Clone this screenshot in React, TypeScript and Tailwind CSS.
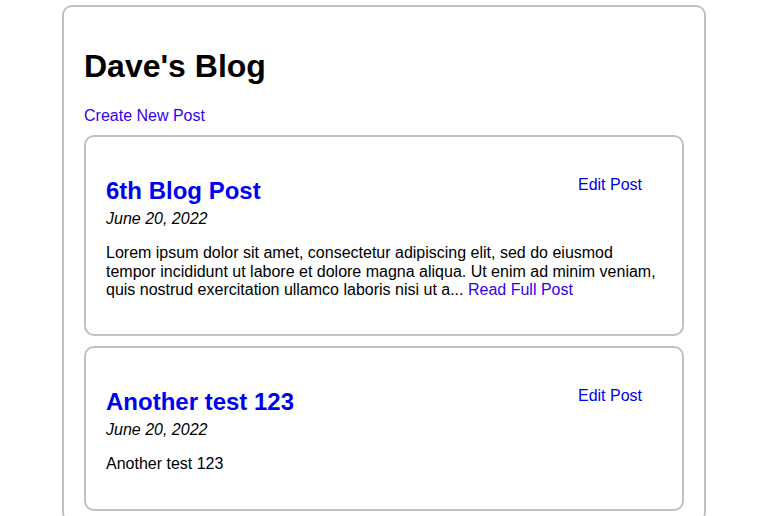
import React from 'react';

interface Post {
  id: number;
  title: string;
  date: string;
  body: string;
  truncated?: boolean;
}

const posts: Post[] = [
  {
    id: 6,
    title: '6th Blog Post',
    date: 'June 20, 2022',
    body: 'Lorem ipsum dolor sit amet, consectetur adipiscing elit, sed do eiusmod tempor incididunt ut labore et dolore magna aliqua. Ut enim ad minim veniam, quis nostrud exercitation ullamco laboris nisi ut a...',
    truncated: true,
  },
  {
    id: 5,
    title: 'Another test 123',
    date: 'June 20, 2022',
    body: 'Another test 123',
  },
];

const PostCard: React.FC<{ post: Post }> = ({ post }) => (
  <article className="mb-[10px] rounded-[10px] border-2 border-[#c0c0c0] bg-white px-[20px] pt-[20px] pb-[20px]">
    <div className="flex items-start justify-between">
      <h2 className="mt-[20px] text-[24px] leading-[27.6px] font-bold text-[#0000ee]">
        {post.title}
      </h2>
      <a href="#" className="mt-[19px] mr-[20px] text-[16px] leading-[18.4px] text-[#0000ee]">
        Edit Post
      </a>
    </div>
    <p className="mt-[5px] text-[16px] leading-[18.4px] italic">{post.date}</p>
    <p className="mt-[16px] mb-[15px] text-[16px] leading-[18.4px]">
      {post.body}
      {post.truncated && (
        <>
          {' '}
          <a href="#" className="text-[#3300ee]">
            Read Full Post
          </a>
        </>
      )}
    </p>
  </article>
);

export default function App() {
  return (
    <div
      className="min-h-screen bg-white pt-[5px] text-black"
      style={{ fontFamily: '"Liberation Sans", Arial, sans-serif' }}
    >
      <main className="ml-[62px] w-[644px] rounded-[10px] border-2 border-[#c0c0c0] px-[20px] pt-[20px]">
        <h1 className="mt-[21px] mb-[22px] text-[32px] leading-[36.8px] font-bold">Dave's Blog</h1>
        <a href="#" className="block text-[16px] leading-[18.4px] text-[#3300ee]">
          Create New Post
        </a>
        <div className="mt-[10px]">
          {posts.map((p) => (
            <PostCard key={p.id} post={p} />
          ))}
        </div>
      </main>
    </div>
  );
}
